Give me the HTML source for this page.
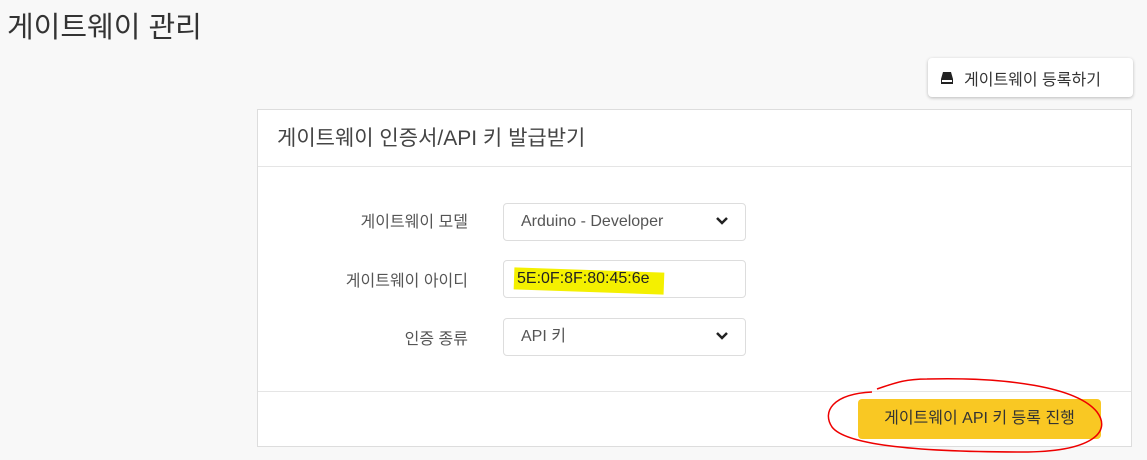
<!DOCTYPE html>
<html><head><meta charset="utf-8"><style>
body{margin:0;width:1147px;height:460px;background:#f8f8f8;font-family:"Liberation Sans","Noto Sans CJK KR",sans-serif;position:relative;overflow:hidden;color:#333}
.a{position:absolute}
h1{position:absolute;left:7px;top:4px;margin:0;font-weight:400;font-size:29px;color:#333}
.btn{left:928px;top:58px;width:205px;height:39px;background:#fff;border-radius:4px;box-shadow:0 1px 3px rgba(0,0,0,.25);font-size:16px;line-height:39px;color:#333}
.panel{left:257px;top:109px;width:875px;height:338px;background:#fff;border:1px solid #ddd;box-sizing:border-box}
.ph{left:0;top:1px;right:0;height:55px;border-bottom:1px solid #e5e5e5;font-size:21px;line-height:56px;padding-left:19px;color:#444}
.lbl{font-size:16px;text-align:right;width:200px;left:10px;color:#555}
.in{left:245px;width:243px;height:38px;border:1px solid #ddd;border-radius:4px;box-sizing:border-box;font-size:16px;line-height:36px;padding-left:17px;color:#555}
.in svg{position:absolute;right:16px;top:12px}
.ft{left:0;right:0;top:281px;border-top:1px solid #e5e5e5}
.yb{left:600px;top:289px;width:243px;height:40px;background:#f9c823;border-radius:4px;font-size:16px;line-height:40px;text-align:center;color:#333}
</style></head><body>
<h1>게이트웨이 관리</h1>
<div class="a btn"><svg class="a" style="left:12px;top:13px" width="14" height="14" viewBox="0 0 14 14"><path d="M3 1h8l2 7v5H1V8z" fill="#222"/><rect x="2" y="9" width="10" height="2" fill="#fff"/></svg><span class="a" style="left:36px;top:3px">게이트웨이 등록하기</span></div>
<div class="a panel">
<div class="a ph">게이트웨이 인증서/API 키 발급받기</div>
<div class="a lbl" style="top:98px">게이트웨이 모델</div>
<div class="a in" style="top:93px">Arduino - Developer<svg width="14" height="10" viewBox="0 0 14 10"><path d="M2 2l5 5 5-5" stroke="#222" stroke-width="2.5" fill="none"/></svg></div>
<div class="a lbl" style="top:157px">게이트웨이 아이디</div>
<div class="a in" style="top:150px"><span class="a" style="left:10px;top:9px;width:150px;height:22px;background:#f4f000;transform:rotate(2deg)"></span><span class="a" style="left:13px;color:#222">5E:0F:8F:80:45:6e</span></div>
<div class="a lbl" style="top:215px">인증 종류</div>
<div class="a in" style="top:208px">API 키<svg width="14" height="10" viewBox="0 0 14 10"><path d="M2 2l5 5 5-5" stroke="#222" stroke-width="2.5" fill="none"/></svg></div>
<div class="a ft"></div>
<div class="a yb">게이트웨이 API 키 등록 진행</div>
</div>
<svg class="a" style="left:0;top:0" width="1147" height="460"><path d="M872 392c-40 2-50 20-40 35 15 20 100 25 190 25 70 0 90-20 75-40-20-25-90-35-170-33-20 0-30 3-50 10" stroke="#e00" stroke-width="1.5" fill="none"/></svg>
</body></html>
